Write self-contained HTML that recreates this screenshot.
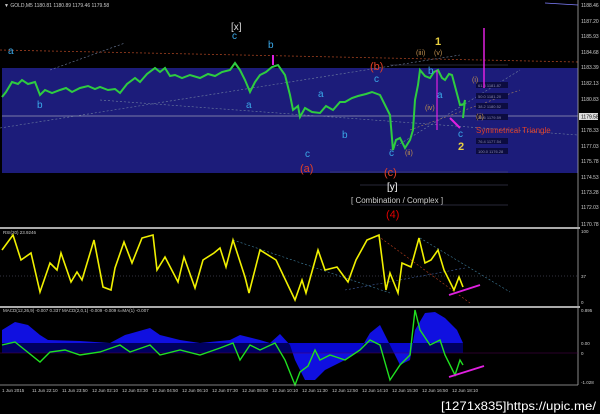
<!DOCTYPE html>
<html><head><meta charset="utf-8"><style>
html,body{margin:0;padding:0;background:#000;width:600px;height:414px;overflow:hidden}
svg{display:block}
text{font-family:"Liberation Sans",sans-serif}
</style></head><body>
<svg width="600" height="414" viewBox="0 0 600 414" xmlns="http://www.w3.org/2000/svg">
<rect width="600" height="414" fill="#000"/>
<rect x="2" y="68" width="576" height="105" fill="#1c1c7a"/>
<line x1="2" y1="116" x2="578" y2="116" stroke="#9a9ab8" stroke-width="0.8"/>
<line x1="0" y1="50" x2="578" y2="62" stroke="#a04020" stroke-width="0.8" stroke-dasharray="2,2"/>
<line x1="50" y1="70" x2="125" y2="43" stroke="#7080a0" stroke-width="0.6" stroke-dasharray="2,2"/>
<line x1="0" y1="128" x2="460" y2="55" stroke="#7080a0" stroke-width="0.6" stroke-dasharray="2,2"/>
<line x1="100" y1="100" x2="578" y2="135" stroke="#7080a0" stroke-width="0.6" stroke-dasharray="2,2"/>
<line x1="390" y1="150" x2="520" y2="70" stroke="#7080a0" stroke-width="0.6" stroke-dasharray="2,2"/>
<line x1="410" y1="130" x2="520" y2="90" stroke="#a08060" stroke-width="0.6" stroke-dasharray="2,2"/>
<g fill="#0c0c40">
<rect x="476" y="82" width="32" height="6"/><rect x="476" y="93" width="32" height="6"/><rect x="476" y="103" width="32" height="6"/>
<rect x="476" y="114" width="32" height="6"/><rect x="476" y="138" width="32" height="6"/><rect x="476" y="148" width="32" height="6"/>
</g>
<g font-size="4" fill="#8888aa"><text x="478" y="87">61.8  1181.87</text><text x="478" y="98">50.0  1181.20</text><text x="478" y="108">38.2  1180.52</text><text x="478" y="119">23.6  1179.59</text><text x="478" y="143">76.4  1177.54</text><text x="478" y="153">100.0 1176.28</text></g>
<g stroke="#505070" stroke-width="0.5"><line x1="390" y1="65" x2="508" y2="65"/><line x1="330" y1="172" x2="508" y2="172"/><line x1="360" y1="185" x2="508" y2="185"/><line x1="360" y1="205" x2="508" y2="205"/></g>
<polyline fill="none" stroke="#2ecc40" stroke-width="2" points="2,97 6,92 12,82 18,84 22,80 28,84 35,82 40,95 45,90 52,93 60,90 66,88 72,92 80,88 88,86 95,89 100,87 108,90 115,89 120,93 127,84 135,78 140,82 147,74 155,68 160,72 165,68 170,76 175,75 182,78 190,75 200,78 208,74 215,76 222,72 230,70 235,63 240,70 245,80 250,92 255,82 260,75 266,72 272,67 278,65 285,75 290,95 293,110 298,106 300,117 305,108 312,112 320,113 326,106 333,110 340,102 345,102 352,98 358,96 366,94 372,92 380,95 385,105 390,115 393,150 396,140 400,138 405,148 410,140 413,130 415,100 418,85 420,70 425,76 430,78 434,72 438,70 442,78 445,80 449,74 452,75 456,90 460,105 464,104 465,100 463,118"/>
<line x1="484" y1="28" x2="484" y2="88" stroke="#e020e0" stroke-width="1.5"/>
<line x1="437" y1="70" x2="437" y2="130" stroke="#e020e0" stroke-width="1.2"/>
<line x1="450" y1="118" x2="460" y2="128" stroke="#e020e0" stroke-width="2"/>
<line x1="273" y1="55" x2="273" y2="65" stroke="#e020e0" stroke-width="2"/>
<g font-size="10" fill="#3aa8e8">
<text x="8" y="54">a</text><text x="37" y="108">b</text><text x="232" y="39">c</text><text x="268" y="48">b</text><text x="246" y="108">a</text>
<text x="318" y="97">a</text><text x="342" y="138">b</text><text x="305" y="157">c</text><text x="374" y="82">c</text>
<text x="428" y="74">b</text><text x="437" y="98">a</text><text x="458" y="137">c</text><text x="389" y="156">c</text>
</g>
<text x="231" y="30" font-size="10" fill="#dddddd">[x]</text>
<g font-size="11" fill="#e04028"><text x="370" y="70">(b)</text><text x="300" y="172">(a)</text><text x="384" y="176">(c)</text></g>
<text x="386" y="218" font-size="11" fill="#e00000">(4)</text>
<text x="387" y="190" font-size="10" fill="#fff">[y]</text>
<text x="351" y="203" font-size="8" fill="#cccccc">[ Combination / Complex ]</text>
<text x="435" y="45" font-size="11" fill="#e8d040" font-weight="bold">1</text>
<text x="458" y="150" font-size="11" fill="#e8d040" font-weight="bold">2</text>
<text x="476" y="133" font-size="8" fill="#e04028">Symmetrical Triangle</text>
<g font-size="7" fill="#c09050"><text x="416" y="55">(iii)</text><text x="434" y="55">(v)</text><text x="425" y="110">(iv)</text><text x="405" y="155">(ii)</text><text x="472" y="82">(i)</text><text x="476" y="119">(ii)</text></g>
<line x1="578" y1="0" x2="578" y2="228" stroke="#aaa" stroke-width="0.8"/>
<g font-size="5" fill="#ccc">
<text x="581" y="7">1188.46</text><text x="581" y="23">1187.20</text><text x="581" y="38">1185.93</text><text x="581" y="54">1184.68</text><text x="581" y="69">1183.39</text><text x="581" y="85">1182.13</text><text x="581" y="101">1180.83</text><text x="581" y="132">1178.33</text><text x="581" y="148">1177.03</text><text x="581" y="163">1175.78</text><text x="581" y="179">1174.53</text><text x="581" y="194">1173.28</text><text x="581" y="209">1172.03</text><text x="581" y="226">1170.78</text>
</g>
<rect x="579" y="113" width="19" height="7" fill="#ddd"/><text x="581" y="118.5" font-size="5" fill="#000">1179.58</text>
<line x1="578" y1="5" x2="545" y2="3" stroke="#8080ff" stroke-width="0.8"/>
<text x="4" y="7" font-size="5" fill="#ccc">▼ GOLD,M5  1180.81 1180.89 1179.46 1179.58</text>
<rect x="0" y="227" width="580" height="2" fill="#aaa"/>
<rect x="0" y="306" width="580" height="2" fill="#aaa"/>
<line x1="578" y1="228" x2="578" y2="385" stroke="#aaa" stroke-width="0.8"/>
<text x="3" y="234" font-size="4.5" fill="#ccc">RSI(20) 23.9246</text>
<line x1="0" y1="276" x2="578" y2="276" stroke="#445" stroke-dasharray="1,2" stroke-width="0.7"/>
<g font-size="4.5" fill="#ccc"><text x="581" y="233">100</text><text x="581" y="278">37</text><text x="581" y="304">0</text></g>
<g stroke-width="0.6" stroke-dasharray="2,2" fill="none">
<line x1="233" y1="240" x2="390" y2="293" stroke="#4080a0"/><line x1="345" y1="290" x2="465" y2="268" stroke="#4060a0"/>
<line x1="420" y1="238" x2="510" y2="292" stroke="#4080a0"/><line x1="378" y1="236" x2="470" y2="303" stroke="#c04020"/>
</g>
<polyline fill="none" stroke="#f0f000" stroke-width="1.6" points="2,250 13,235 21,260 31,253 40,292 50,263 57,270 61,253 71,282 77,272 82,280 94,240 103,287 111,290 115,268 124,242 132,263 142,238 153,235 157,270 165,257 178,282 184,257 195,288 203,260 214,253 220,248 226,267 233,240 245,277 249,293 260,250 276,260 295,300 302,280 306,293 318,250 325,270 337,267 348,282 356,260 367,240 379,235 386,290 390,273 398,293 402,263 411,267 419,238 425,263 431,260 438,250 444,270 454,290 459,277 463,287"/>
<line x1="449" y1="295" x2="480" y2="285" stroke="#e020e0" stroke-width="1.8"/>
<text x="3" y="312" font-size="4.5" fill="#ccc">MACD(12,26,9) -0.007 0.337  MACD(2,0,1) -0.009 -0.009  s=MA(1) -0.007</text>
<g font-size="4.5" fill="#ccc"><text x="581" y="312">0.895</text><text x="581" y="345">0.00</text><text x="581" y="355">0</text><text x="581" y="384">-1.028</text></g>
<path d="M2,343 L2,330 L15,322 L28,325 L40,335 L48,340 L80,341 L110,343 L125,335 L150,328 L160,335 L180,340 L200,343 L230,340 L240,335 L260,340 L270,343 Z" fill="#1010e0"/>
<path d="M270,343 L280,334 L290,345 L295,360 L305,380 L315,380 L325,370 L345,360 L360,350 L370,333 L380,325 L390,345 L400,365 L410,360 L415,330 L425,313 L435,312 L445,318 L457,330 L463,343 Z" fill="#1010e0"/>
<rect x="2" y="343" width="461" height="10" fill="#0000c0" opacity="0.5"/>
<line x1="0" y1="353" x2="578" y2="353" stroke="#505" stroke-width="0.6"/>
<polyline fill="none" stroke="#20e020" stroke-width="1.4" points="2,345 15,342 25,350 40,362 50,352 65,350 80,355 100,352 120,345 130,352 150,345 160,355 180,350 200,355 220,348 233,343 240,360 250,345 260,350 275,343 285,360 295,385 300,372 308,366 315,350 320,360 330,355 345,360 360,350 370,340 380,345 390,380 400,365 410,355 415,310 420,330 430,345 440,340 445,355 455,375 460,360 463,365"/>
<line x1="449" y1="377" x2="484" y2="366" stroke="#e020e0" stroke-width="1.8"/>
<line x1="0" y1="385" x2="578" y2="385" stroke="#aaa" stroke-width="0.8"/>
<g font-size="4.5" fill="#ccc">
<text x="2" y="392">1 Jun 2015</text><text x="32" y="392">11 Jun 22:10</text><text x="62" y="392">11 Jun 23:50</text><text x="92" y="392">12 Jun 02:10</text><text x="122" y="392">12 Jun 03:30</text><text x="152" y="392">12 Jun 04:50</text><text x="182" y="392">12 Jun 06:10</text><text x="212" y="392">12 Jun 07:30</text><text x="242" y="392">12 Jun 08:50</text><text x="272" y="392">12 Jun 10:10</text><text x="302" y="392">12 Jun 11:30</text><text x="332" y="392">12 Jun 12:50</text><text x="362" y="392">12 Jun 14:10</text><text x="392" y="392">12 Jun 15:30</text><text x="422" y="392">12 Jun 16:50</text><text x="452" y="392">12 Jun 18:10</text>
</g>
<text x="596" y="410" font-size="12" fill="#fff" text-anchor="end" textLength="155" lengthAdjust="spacingAndGlyphs">[1271x835]https://upic.me/</text>
</svg>
</body></html>
